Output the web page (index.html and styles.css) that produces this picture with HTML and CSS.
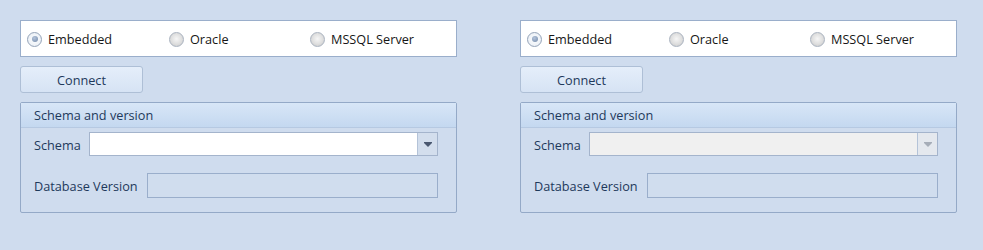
FILE: index.html
```html
<!DOCTYPE html>
<html lang="en">
<head>
    <meta charset="UTF-8">
    <title>Database Connection</title>
    <link rel="stylesheet" href="styles.css">
</head>
<body>
    <div class="panels">
        <!-- Enabled panel -->
        <div class="panel">
            <div class="radio-box">
                <label class="radio checked"><span class="dot"></span>Embedded</label>
                <label class="radio"><span class="dot"></span>Oracle</label>
                <label class="radio"><span class="dot"></span>MSSQL Server</label>
            </div>
            <button class="connect-btn">Connect</button>
            <div class="group">
                <div class="group-header">Schema and version</div>
                <div class="group-body">
                    <div class="row">
                        <span class="field-label">Schema</span>
                        <div class="combo">
                            <div class="combo-text"></div>
                            <div class="combo-btn"><span class="arrow"></span></div>
                        </div>
                    </div>
                    <div class="row row-version">
                        <span class="field-label">Database Version</span>
                        <div class="text-field"></div>
                    </div>
                </div>
            </div>
        </div>

        <!-- Disabled panel -->
        <div class="panel">
            <div class="radio-box">
                <label class="radio checked"><span class="dot"></span>Embedded</label>
                <label class="radio"><span class="dot"></span>Oracle</label>
                <label class="radio"><span class="dot"></span>MSSQL Server</label>
            </div>
            <button class="connect-btn">Connect</button>
            <div class="group">
                <div class="group-header">Schema and version</div>
                <div class="group-body">
                    <div class="row">
                        <span class="field-label">Schema</span>
                        <div class="combo disabled">
                            <div class="combo-text"></div>
                            <div class="combo-btn"><span class="arrow"></span></div>
                        </div>
                    </div>
                    <div class="row row-version">
                        <span class="field-label">Database Version</span>
                        <div class="text-field"></div>
                    </div>
                </div>
            </div>
        </div>
    </div>
</body>
</html>
```

FILE: styles.css
```css
body {
    margin: 0;
    background-color: #cfdcee;
    font-family: "Open Sans", "Liberation Sans", sans-serif;
    font-size: 12.7px;
    color: #1e395b;
}
.panels {
    display: flex;
    gap: 63px;
    padding: 20px;
}
.panel {
    width: 437px;
    display: flex;
    flex-direction: column;
    align-items: flex-start;
}
.radio-box {
    box-sizing: border-box;
    width: 100%;
    height: 37px;
    background: #ffffff;
    border: 1px solid #9aaecb;
    display: grid;
    grid-template-columns: 142px 141px 1fr;
    align-items: center;
    padding: 1px 0 0 6px;
}
.radio {
    display: flex;
    align-items: center;
    color: #161616;
}
.radio .dot {
    box-sizing: border-box;
    width: 15px;
    height: 15px;
    border-radius: 50%;
    border: 1px solid #aab3c0;
    background: radial-gradient(circle at 50% 45%, #f6f6f6 0%, #dedede 55%, #c4c4c4 100%);
    margin-right: 6px;
    position: relative;
}
.radio.checked .dot {
    border-color: #95a4b9;
    background: radial-gradient(circle at 50% 50%, #ffffff 0%, #eef2f7 65%, #cdd6e3 100%);
}
.radio.checked .dot::after {
    content: "";
    position: absolute;
    left: 3.5px;
    top: 3.5px;
    width: 6px;
    height: 6px;
    border-radius: 50%;
    background: radial-gradient(circle at 40% 35%, #b3c4dc 0%, #7489a7 100%);
}
.connect-btn {
    margin-top: 9px;
    width: 123px;
    height: 27px;
    border: 1px solid #aebfd6;
    border-radius: 3px;
    background: linear-gradient(#e5eefa, #d6e3f4);
    color: #1e395b;
    font-family: inherit;
    font-size: 12.7px;
    padding: 1px 0 0;
}
.group {
    margin-top: 9px;
    box-sizing: border-box;
    width: 100%;
    height: 111px;
    border: 1px solid #94a9c7;
    border-radius: 2px;
}
.group-header {
    height: 24px;
    line-height: 25px;
    padding-left: 13px;
    background: linear-gradient(#d8e6f7, #c4d8f0);
    border-bottom: 1px solid #b6c9e2;
}
.group-body {
    padding: 4px 18px 0 13px;
}
.row {
    display: flex;
    align-items: center;
    gap: 8px;
}
.row-version {
    margin-top: 17px;
    gap: 9px;
}
.field-label {
    white-space: nowrap;
    padding-top: 1px;
}
.combo {
    flex: 1;
    display: flex;
    height: 24px;
    box-sizing: border-box;
    border: 1px solid #a4b4cc;
    background: #ffffff;
}
.combo-text {
    flex: 1;
}
.combo-btn {
    width: 19px;
    border-left: 1px solid #b4c3d8;
    background: #d3deed;
    display: flex;
    align-items: center;
    justify-content: center;
}
.arrow {
    width: 0;
    height: 0;
    border-left: 4px solid transparent;
    border-right: 4px solid transparent;
    border-top: 4px solid #4a5870;
    position: relative;
    top: 1px;
}
.arrow::before {
    content: "";
    position: absolute;
    left: -4px;
    top: -5px;
    width: 8px;
    height: 1px;
    background: #4a5870;
}
.combo.disabled {
    background: #f0f0f0;
}
.combo.disabled .combo-btn {
    background: #e4e8ee;
}
.combo.disabled .arrow {
    border-top-color: #a6adb8;
}
.combo.disabled .arrow::before {
    background: #a6adb8;
}
.text-field {
    flex: 1;
    height: 25px;
    box-sizing: border-box;
    border: 1px solid #9aaecb;
    background: #d0ddee;
}
```
